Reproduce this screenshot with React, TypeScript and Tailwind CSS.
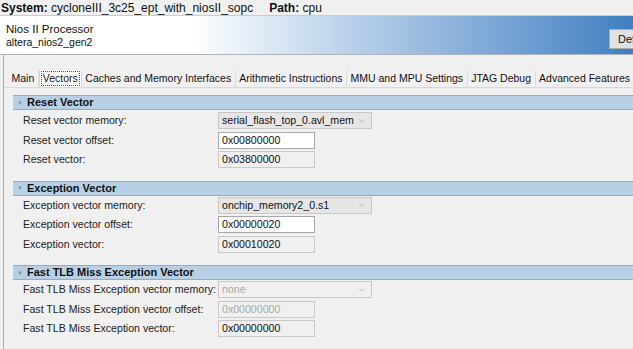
import { ChevronDown } from "lucide-react";

const font = { fontFamily: "'Liberation Sans', Arial, sans-serif" };

const tabs = [
  "Main",
  "Vectors",
  "Caches and Memory Interfaces",
  "Arithmetic Instructions",
  "MMU and MPU Settings",
  "JTAG Debug",
  "Advanced Features",
];

function SectionHeader({ title }: { title: string }) {
  return (
    <div className="ml-[9px] flex h-[15px] items-center border-y border-[#a3a8ae] bg-[#b8d0e6] pl-[4px]">
      <span className="mr-[4px] text-[6px] leading-none text-[#8a8f96]">▼</span>
      <span className="whitespace-nowrap text-[11px] font-bold leading-none text-[#111]">{title}</span>
    </div>
  );
}

function SelectBox({ value, disabled }: { value: string; disabled?: boolean }) {
  return (
    <div
      className={`flex h-[17px] w-[154px] shrink-0 items-center justify-between border border-[#c8c8c8] pl-[3px] pr-[4px] ${
        disabled ? "bg-[#f0f0f0] text-[#a8a8a8]" : "bg-[#e6e6e6] text-[#111]"
      }`}
    >
      <span className="whitespace-nowrap text-[10.6px] leading-none">{value}</span>
      <ChevronDown className="size-[10px] shrink-0 text-[#9a9a9a]" strokeWidth={1.5} />
    </div>
  );
}

function Field({ value, kind }: { value: string; kind: "edit" | "ro" | "disabled" }) {
  const cls =
    kind === "edit"
      ? "bg-white border-[#a8a8a8] text-[#111]"
      : kind === "ro"
      ? "bg-[#f0f0f0] border-[#c8c8c8] text-[#111]"
      : "bg-[#f0f0f0] border-[#c8c8c8] text-[#a8a8a8]";
  return (
    <div className={`flex h-[17px] w-[97px] shrink-0 items-center border pl-[3px] text-[10.6px] leading-none ${cls}`}>
      {value}
    </div>
  );
}

function Row({ label, children }: { label: string; children: React.ReactNode }) {
  return (
    <div className="flex h-[19.5px] items-center">
      <div className="w-[214px] shrink-0 whitespace-nowrap pl-[19px] text-[10.6px] leading-none text-[#222]">{label}</div>
      {children}
    </div>
  );
}

export default function App() {
  return (
    <div className="h-[349px] w-[633px] overflow-hidden bg-[#f0f0f0]" style={font}>
      {/* system bar */}
      <div className="flex h-[16px] items-center gap-[16px] whitespace-nowrap border-b border-[#c9ccd1] bg-[#f0f0f0] pl-[1px] text-[12px] leading-none text-[#111]">
        <span>
          <b>System:</b> cycloneIII_3c25_ept_with_niosII_sopc
        </span>
        <span>
          <b>Path:</b> cpu
        </span>
      </div>

      {/* component header */}
      <div className="flex h-[39px] items-center justify-between border-b border-[#b0b4ba] bg-gradient-to-r from-white from-[30%] to-[#3f7fc1] pl-[6px]">
        <div className="flex flex-col">
          <span className="text-[11.5px] leading-[14px] text-[#111]">Nios II Processor</span>
          <span className="text-[10.5px] leading-[13px] text-[#111]">altera_nios2_gen2</span>
        </div>
        <div className="mt-[8px] flex h-[20px] w-[24px] items-center border border-r-0 border-[#adadad] bg-[#e1e1e1] pl-[8px] text-[11px] text-[#111]">
          Def
        </div>
      </div>

      <div className="flex">
        <div className="h-[294px] w-[4px] shrink-0 border-r border-[#9fb1c8]" />
        <div className="min-w-0 flex-1">
          {/* tabs */}
          <div className="mt-[15px] flex h-[18px] items-end overflow-hidden border-b border-[#d9d9d9] pl-[4px]">
            {tabs.map((t) => (
              <div
                key={t}
                className={`flex h-[18px] shrink-0 items-center whitespace-nowrap text-[10.5px] leading-none text-[#111] ${
                  t === "Vectors"
                    ? "border border-b-0 border-[#d9d9d9] bg-white px-[1px]"
                    : "border-r border-[#dcdcdc] px-[3.5px]"
                }`}
              >
                <span className={t === "Vectors" ? "border border-dotted border-[#555] px-[1px] py-[1px]" : ""}>{t}</span>
              </div>
            ))}
          </div>

          <div className="mt-[7px]">
            <SectionHeader title="Reset Vector" />
            <div className="mt-[1px] flex flex-col">
              <Row label="Reset vector memory:">
                <SelectBox value="serial_flash_top_0.avl_mem" />
              </Row>
              <Row label="Reset vector offset:">
                <Field value="0x00800000" kind="edit" />
              </Row>
              <Row label="Reset vector:">
                <Field value="0x03800000" kind="ro" />
              </Row>
            </div>

            <div className="mt-[11px]">
              <SectionHeader title="Exception Vector" />
            </div>
            <div className="flex flex-col">
              <Row label="Exception vector memory:">
                <SelectBox value="onchip_memory2_0.s1" />
              </Row>
              <Row label="Exception vector offset:">
                <Field value="0x00000020" kind="edit" />
              </Row>
              <Row label="Exception vector:">
                <Field value="0x00010020" kind="ro" />
              </Row>
            </div>

            <div className="mt-[11px]">
              <SectionHeader title="Fast TLB Miss Exception Vector" />
            </div>
            <div className="flex flex-col">
              <Row label="Fast TLB Miss Exception vector memory:">
                <SelectBox value="none" disabled />
              </Row>
              <Row label="Fast TLB Miss Exception vector offset:">
                <Field value="0x00000000" kind="disabled" />
              </Row>
              <Row label="Fast TLB Miss Exception vector:">
                <Field value="0x00000000" kind="ro" />
              </Row>
            </div>
          </div>
        </div>
      </div>
    </div>
  );
}
